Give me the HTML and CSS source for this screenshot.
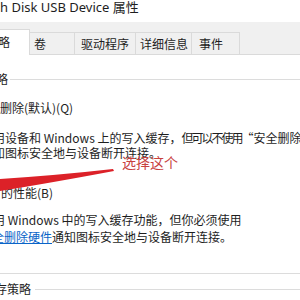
FILE: index.html
```html
<!DOCTYPE html>
<html>
<head>
  <meta http-equiv="Content-type" content="text/html; charset=utf-8">
  <title>属性</title>
  <link rel="stylesheet" href="styles.css">
</head>
<body>
<div class="win">
  <div class="title">h Disk USB Device 属性</div>
  <div class="tabs">
    <div class="tab sel"><span class="cut2">略</span></div>
    <div class="tab t2">卷</div>
    <div class="tab t3">驱动程序</div>
    <div class="tab t4">详细信息</div>
    <div class="tab t5">事件</div>
  </div>
  <div class="page">
    <div class="group g1"><span class="glabel cut4">略</span><span class="gline"></span></div>
    <div class="opt o1">删除(默认)(Q)</div>
    <div class="para p1">
      <div class="ln cut7">用设备和 Windows 上的写入缓存，<span class="tight">但可以不使用</span>“安全删除</div>
      <div class="ln cut7">知图标安全地与设备断开连接。</div>
    </div>
    <div class="opt o2">的性能(B)</div>
    <div class="para p2">
      <div class="ln cut7">用 Windows 中的写入缓存功能，但你必须使用</div>
      <div class="ln"><a class="link cut8" href="#">全删除硬件</a>通知图标安全地与设备断开连接。</div>
    </div>
    <div class="sep"></div>
    <div class="group g2"><span class="glabel cut5">存策略</span><span class="gline"></span></div>
  </div>

  <div class="note">选择这个</div>
  <svg class="arrow" width="300" height="300" viewBox="0 0 300 300">
    <path d="M113 169 Q60 175 0 179 L0 191 Q50 183 114 171 Z" fill="#dc2128"/>
  </svg>
</div>
</body>
</html>
```

FILE: styles.css
```css
body{margin:0;background:#fff;color:#1e1e1e;font:12px "Noto Sans CJK SC","Noto Sans",sans-serif;}
.win{position:relative;width:300px;height:300px;overflow:hidden;}
.title{height:22px;font:13px "Noto Sans","Noto Sans CJK SC",sans-serif;line-height:14px;white-space:nowrap;}

.tabs{display:flex;align-items:flex-end;height:33px;background:#f0f0f0;border-bottom:1px solid #dadada;box-sizing:border-box;}
.tab{height:22px;line-height:21px;box-sizing:border-box;border:1px solid #dadada;border-bottom:none;margin-left:-1px;white-space:nowrap;background:#f0f0f0;}
.tab.sel{height:26px;line-height:24px;width:30px;background:#fff;margin:0 0 -1px 0;border-left:none;position:relative;z-index:1;}
.t2{width:46px;padding-left:4px;}
.t3{width:62px;padding-left:6px;}
.t4{width:57px;padding-left:4px;}
.t5{width:49px;padding-left:7px;}

.page{white-space:nowrap;}
.group{display:flex;align-items:center;height:16px;line-height:16px;}
.gline{flex:1;border-top:1px solid #dcdcdc;margin-left:2px;}
.g1{margin-top:16px;}
.g2{margin-top:7px;}
.g2 .gline{margin-left:4px;}
.opt{line-height:16px;}
.o1{margin-top:13px;}
.o2{margin-top:25px;margin-left:1px;}
.p1{margin-top:14px;line-height:15px;}
.p2{margin-top:10px;line-height:17px;}
.tight{letter-spacing:-2px;}
.link{color:#0a64c8;text-decoration:underline;}
.sep{margin-top:28px;border-top:1px solid #dcdcdc;}

.cut2{margin-left:-2px;}
.cut4{margin-left:-4px;}
.cut5{margin-left:-5px;}
.cut7{margin-left:-7px;}
.cut8{margin-left:-8px;}
.ln a.cut8{display:inline-block;}

.note{position:absolute;left:122px;top:152px;font-size:14px;line-height:20px;color:#c8423e;}
.arrow{position:absolute;left:0;top:0;}
```
